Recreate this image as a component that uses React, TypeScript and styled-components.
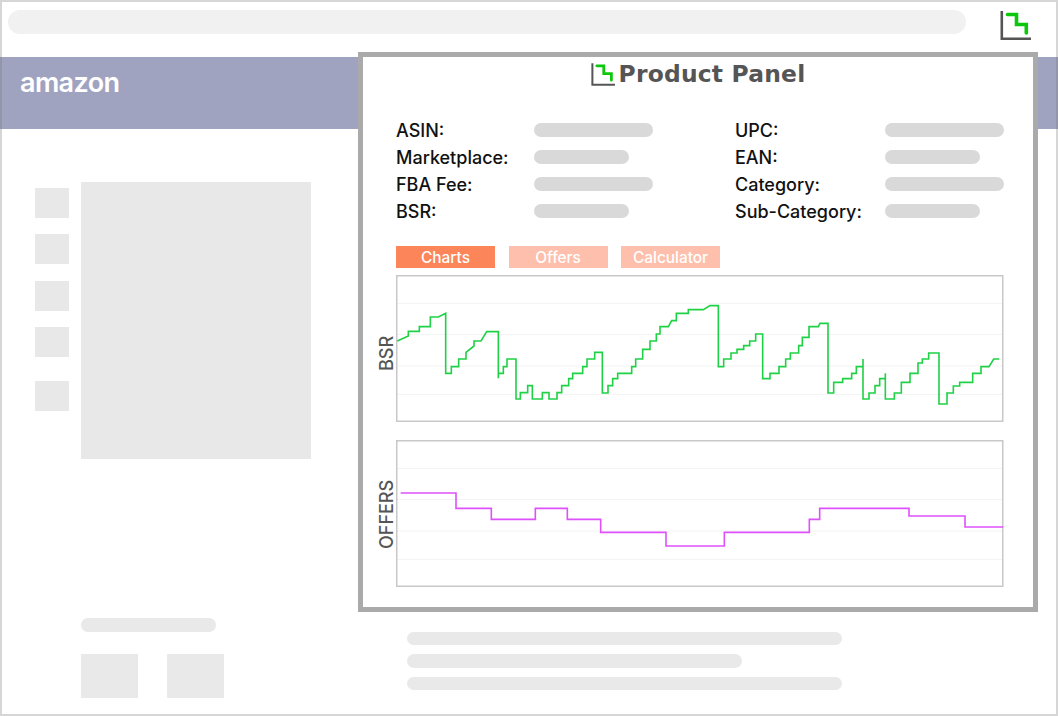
import React from "react";
import styled, { createGlobalStyle } from "styled-components";

const Global = createGlobalStyle`
  html, body { margin: 0; padding: 0; background: #fff; }
  body { font-family: "Inter", "Liberation Sans", sans-serif; }
`;

const Frame = styled.div`
  position: relative;
  box-sizing: border-box;
  width: 1058px;
  height: 716px;
  background: #fff;
  overflow: hidden;
  display: flex;
  flex-direction: column;

  &::after {
    content: "";
    position: absolute;
    inset: 0;
    border: 2px solid rgba(120, 120, 120, 0.3);
    pointer-events: none;
  }
`;

const TopBar = styled.div`
  height: 57px;
  flex: none;
  box-sizing: border-box;
  padding: 10px 27px 0 8px;
  display: flex;
  align-items: flex-start;
  gap: 34px;
`;

const SearchBar = styled.div`
  flex: 1;
  height: 24px;
  border-radius: 12px;
  background: #f1f1f1;
`;

const IconSvg = styled.svg<{ $w: number; $h: number }>`
  flex: none;
  display: block;
  width: ${(p) => p.$w}px;
  height: ${(p) => p.$h}px;
`;

const Band = styled.div`
  height: 72px;
  flex: none;
  background: #a0a3c0;
  padding: 0 0 0 20px;
  display: flex;
  align-items: flex-start;
`;

const Logo = styled.span`
  color: #fff;
  font-family: "Inter", sans-serif;
  font-weight: 600;
  font-size: 27px;
  line-height: 28px;
  margin-top: 12px;
  letter-spacing: -0.6px;
`;

const Body = styled.div`
  flex: 1;
  display: flex;
  flex-direction: column;
  padding: 52.5px 0 0 34.5px;
`;

const Gallery = styled.div`
  display: flex;
  gap: 12px;
  height: 277.5px;
`;

const Thumbs = styled.div`
  width: 34.5px;
  padding-top: 6px;
  display: flex;
  flex-direction: column;
  gap: 16.5px;
`;

const Thumb = styled.div<{ $gap?: number }>`
  height: 30px;
  background: #e8e8e8;
  margin-top: ${(p) => p.$gap ?? 0}px;
`;

const MainImage = styled.div`
  width: 229.5px;
  background: #e8e8e8;
`;

const Lower = styled.div`
  display: flex;
  padding: 159px 0 0 46.5px;
  gap: 182.5px;
`;

const LowerLeft = styled.div`
  width: 143px;
  display: flex;
  flex-direction: column;
  gap: 22.5px;
`;

const Swatches = styled.div`
  display: flex;
  gap: 28.5px;
`;

const Swatch = styled.div`
  width: 57px;
  height: 43.5px;
  background: #e9e9e9;
`;

const LowerRight = styled.div`
  display: flex;
  flex-direction: column;
  gap: 9px;
  padding-top: 13.5px;
`;

const GhostLine = styled.div<{ $w: number }>`
  width: ${(p) => p.$w}px;
  height: 13.5px;
  border-radius: 7px;
  background: #e9e9e9;
`;

const Panel = styled.section`
  position: absolute;
  left: 358px;
  top: 52px;
  width: 680px;
  height: 560px;
  box-sizing: border-box;
  border: 5px solid #aaaaaa;
  background: #fff;
  padding: 0 29px 0 14px;
  display: flex;
  flex-direction: column;
`;

const Title = styled.div`
  height: 59.5px;
  display: flex;
  justify-content: center;
  align-items: flex-start;
  gap: 4px;
  padding: 5px 0 0 15px;
  box-sizing: border-box;
`;

const TitleText = styled.h1`
  margin: 0;
  font-family: "DejaVu Sans", sans-serif;
  font-weight: 700;
  font-size: 23.4px;
  line-height: 24px;
  color: #555555;
  letter-spacing: 0.2px;
`;

const Fields = styled.div`
  margin-left: 19px;
  display: grid;
  grid-template-columns: 339px 1fr;
  grid-auto-rows: 27px;
`;

const Field = styled.div<{ $labelW: number }>`
  display: grid;
  grid-template-columns: ${(p) => p.$labelW}px 1fr;
  align-items: center;
`;

const Label = styled.span`
  font-size: 18px;
  font-weight: 500;
  color: #111111;
  line-height: 27px;
`;

const ValuePill = styled.div<{ $w: number }>`
  width: ${(p) => p.$w}px;
  height: 14.5px;
  border-radius: 7.5px;
  background: #d9d9d9;
`;

const Tabs = styled.nav`
  margin: 21.5px 0 7px 19px;
  display: flex;
  gap: 13.5px;
`;

const Tab = styled.div<{ $active?: boolean }>`
  width: 99px;
  height: 22px;
  background: ${(p) => (p.$active ? "#fc855a" : "#fec0ac")};
  color: #fff;
  font-size: 15.4px;
  font-weight: 500;
  line-height: 23px;
  text-align: center;
`;

const ChartRow = styled.div<{ $mb?: number }>`
  display: flex;
  align-items: center;
  height: 147px;
  margin-bottom: ${(p) => p.$mb ?? 0}px;
`;

const AxisLabel = styled.div<{ $shift: number }>`
  width: 19px;
  flex: none;
  box-sizing: border-box;
  writing-mode: vertical-rl;
  transform: rotate(180deg);
  display: flex;
  align-items: center;
  justify-content: center;
  font-size: 18px;
  font-weight: 500;
  color: #555555;
  line-height: 19px;
  height: 147px;
  padding-bottom: ${(p) => p.$shift * 2}px;
`;

const ChartSvg = styled.svg`
  display: block;
  width: 608px;
  height: 147px;
  flex: none;
`;

const Logomark = ({ w, h }: { w: number; h: number }) => (
  <IconSvg $w={w} $h={h} viewBox="0 0 31 30">
    <path d="M1.8 1V28.8H31" fill="none" stroke="#555" strokeWidth="2.6" />
    <path d="M7.5 4.5H16.5V14.5H26.3V23" fill="none" stroke="#0cc80c" strokeWidth="3.6" strokeLinecap="round" />
  </IconSvg>
);

type P = [number, number];
const pts = (zoomPts: P[], ox: number, oy: number) =>
  zoomPts.map(([x, y]) => `${(x / 3 + ox).toFixed(2)},${(y / 3 + oy).toFixed(2)}`).join(" ");

const bsrA: P[] = [
  [82,213],[115,198],[115,184],[148,184],[148,170],[181,170],[181,141],[205,141],[227,130],[227,310],[244,310],[244,290],[266,290],[266,267],[288,267],[288,247],[312,228],[312,213],[333,213],[350,185],[385,185],[385,325],[385,310],[400,310],[400,290],[411,290],[411,267],[438,267],[438,387],[451,387],[451,368],[473,368],[473,347],[487,347],[487,387],[517,387],[517,368],[537,368],[537,387],[561,387],[561,368],[575,368],[575,347],[596,347],[596,326],[608,326],[608,310],[638,310],[638,290],[651,290],[651,267],[674,267],[674,247],[697,247],[697,369],[714,369],[714,347],[728,347],[728,326],[743,326],[743,310],[785,310],[785,290],[797,290],[797,267],[818,267],[818,238],[840,238],[840,213],[859,213],[859,192],[870,192],[870,170],[895,170],[905,152],[919,152],[919,130],[955,130],[955,119],[960,119],
];
const bsrB: P[] = [
  [0,119],[40,119],[60,107],[85,107],[85,290],[101,290],[101,267],[123,267],[123,249],[141,249],[141,238],[161,238],[161,227],[179,227],[179,213],[197,213],[197,192],[218,192],[218,326],[240,326],[240,310],[267,310],[267,290],[287,290],[287,267],[301,267],[301,249],[326,249],[326,227],[337,227],[337,202],[357,202],[357,170],[385,170],[390,160],[414,160],[414,369],[431,369],[431,337],[458,337],[458,326],[485,326],[485,310],[499,310],[499,290],[519,290],[519,267],[519,387],[537,387],[537,369],[555,369],[555,347],[569,347],[569,326],[586,326],[586,310],[586,387],[613,387],[613,369],[634,369],[634,337],[660,337],[660,310],[684,310],[684,279],[697,279],[697,267],[716,267],[716,249],[747,249],[747,402],[771,402],[771,369],[790,369],[790,348],[809,348],[809,337],[848,337],[848,310],[873,310],[873,290],[897,290],[911,267],[928,267],
];
const offersA: P[] = [
  [92,189],[258,189],[258,235],[364,235],[364,268],[496,268],[496,235],[592,235],[592,268],[692,268],[692,307],[888,307],[888,348],[960,348],
];
const offersB: P[] = [
  [0,348],[103,348],[103,307],[358,307],[358,268],[389,268],[389,235],[657,235],[657,258],[825,258],[825,291],[940,291],
];

const Chart = ({
  top, grid, line, color, width,
}: { top: number; grid: number[]; line: string; color: string; width: number }) => (
  <ChartSvg viewBox={`396 ${top} 608 147`}>
    {grid.map((y) => (
      <line key={y} x1="397" x2="1003" y1={y} y2={y} stroke="#f4f4f4" strokeWidth="1.2" />
    ))}
    <rect x="396.75" y={top + 0.75} width="606" height="145.5" fill="none" stroke="#c8c8c8" strokeWidth="1.5" />
    <polyline points={line} fill="none" stroke={color} strokeWidth={width} />
  </ChartSvg>
);

const left: [string, number][] = [["ASIN:", 119], ["Marketplace:", 95], ["FBA Fee:", 119], ["BSR:", 95]];
const right: [string, number][] = [["UPC:", 119], ["EAN:", 95], ["Category:", 119], ["Sub-Category:", 95]];

export default function App() {
  return (
    <>
      <Global />
      <Frame>
        <TopBar>
          <SearchBar />
          <Logomark w={31} h={30} />
        </TopBar>
        <Band>
          <Logo>amazon</Logo>
        </Band>
        <Body>
          <Gallery>
            <Thumbs>
              <Thumb />
              <Thumb />
              <Thumb />
              <Thumb />
              <Thumb $gap={7.5} />
            </Thumbs>
            <MainImage />
          </Gallery>
          <Lower>
            <LowerLeft>
              <GhostLine $w={135} />
              <Swatches>
                <Swatch />
                <Swatch />
              </Swatches>
            </LowerLeft>
            <LowerRight>
              <GhostLine $w={435} />
              <GhostLine $w={335} />
              <GhostLine $w={435} />
            </LowerRight>
          </Lower>
        </Body>
        <Panel>
          <Title>
            <Logomark w={24} h={24} />
            <TitleText>Product Panel</TitleText>
          </Title>
          <Fields>
            {left.map(([l, w], i) => (
              <React.Fragment key={l}>
                <Field $labelW={138}>
                  <Label>{l}</Label>
                  <ValuePill $w={w} />
                </Field>
                <Field $labelW={150}>
                  <Label>{right[i][0]}</Label>
                  <ValuePill $w={right[i][1]} />
                </Field>
              </React.Fragment>
            ))}
          </Fields>
          <Tabs>
            <Tab $active>Charts</Tab>
            <Tab>Offers</Tab>
            <Tab>Calculator</Tab>
          </Tabs>
          <ChartRow $mb={18}>
            <AxisLabel $shift={5}>BSR</AxisLabel>
            <Chart
              top={275}
              grid={[303.5, 334.5, 366, 394.5]}
              color="#1ed145"
              width={1.6}
              line={pts(bsrA, 370, 270) + " " + pts(bsrB, 690, 270)}
            />
          </ChartRow>
          <ChartRow>
            <AxisLabel $shift={1}>OFFERS</AxisLabel>
            <Chart
              top={440}
              grid={[468.5, 499.5, 531, 559.5]}
              color="#de50fb"
              width={1.6}
              line={pts(offersA, 370, 430) + " " + pts(offersB, 690, 430)}
            />
          </ChartRow>
        </Panel>
      </Frame>
    </>
  );
}
